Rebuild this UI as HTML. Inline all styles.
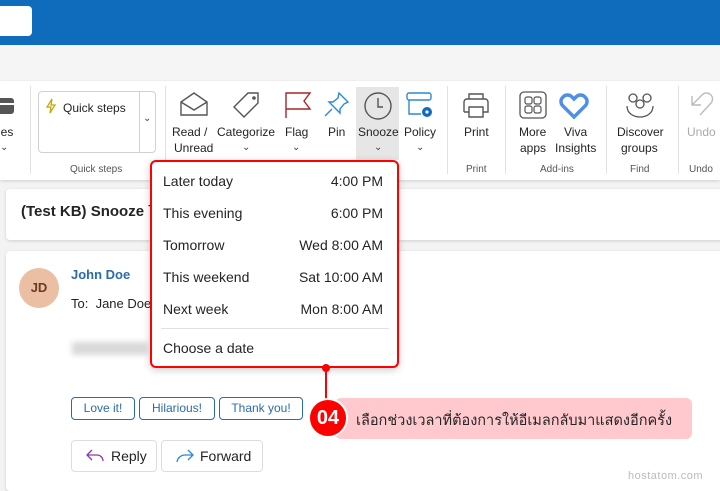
<!DOCTYPE html>
<html><head><meta charset="utf-8"><style>
*{box-sizing:border-box;margin:0;padding:0}
body{width:720px;height:486px;overflow:hidden;background:#f3f3f3;font-family:"Segoe UI","Liberation Sans",sans-serif;color:#242424;position:relative}
.abs{position:absolute}
.top{left:0;top:0;width:720px;height:45px;background:#0f6cbd}
.search{left:-10px;top:6px;width:42px;height:30px;background:#fff;border-radius:4px}
.band{left:0;top:45px;width:720px;height:36px;background:#f5f5f5}
.ribbon{left:0;top:81px;width:720px;height:99px;background:#fff;box-shadow:0 1px 3px rgba(0,0,0,.15)}
.lbl{font-size:12px;color:#242424;text-align:center;line-height:16px}
.glbl{font-size:10px;color:#555;top:162px}
.sep{top:86px;width:1px;height:88px;background:#e1e1e1}
.chev{font-size:10px;color:#444}
.card{background:#fff;border-radius:4px;box-shadow:0 1px 3px rgba(0,0,0,.15)}
.menu{left:150px;top:160px;width:249px;height:208px;background:#fff;border:2px solid #f00;border-radius:6px;box-shadow:0 2px 8px rgba(0,0,0,.2)}
.row{position:absolute;left:11px;right:14px;font-size:14px;display:flex;justify-content:space-between;color:#242424}
.pill{top:397px;height:23px;border:1px solid #2b6ca8;border-radius:4px;font-size:12px;color:#2b6ca8;text-align:center;line-height:21px}
.btn{top:440px;height:32px;border:1px solid #ddd;border-radius:4px;font-size:14px;line-height:30px}
</style></head><body>
<div class="abs top"></div>
<div class="abs search"></div>
<div class="abs band"></div>
<div class="abs ribbon"></div>

<svg class="abs" style="left:-6px;top:94px" width="24" height="24"><rect x="2" y="4" width="18" height="16" rx="3" fill="#555"/><path d="M2 10h18" stroke="#fff" stroke-width="2"/></svg>
<div class="abs lbl" style="left:-2px;top:124px">les</div>
<div class="abs chev" style="left:0;top:142px">⌄</div>
<div class="abs sep" style="left:30px"></div>

<div class="abs" style="left:38px;top:91px;width:118px;height:62px;border:1px solid #d1d1d1;border-radius:4px"></div>
<div class="abs" style="left:139px;top:91px;width:1px;height:62px;background:#d1d1d1"></div>
<div class="abs chev" style="left:143px;top:113px">⌄</div>
<svg class="abs" style="left:45px;top:98px" width="12" height="16"><path d="M7 1L2 9h4l-1 6 5-8H6z" fill="none" stroke="#c8a200" stroke-width="1.2"/></svg>
<div class="abs lbl" style="left:63px;top:100px">Quick steps</div>
<div class="abs lbl glbl" style="left:70px">Quick steps</div>
<div class="abs sep" style="left:165px"></div>

<svg class="abs" style="left:178px;top:90px" width="32" height="28"><path d="M3 12L16 3l13 9v13H3z M3 12l13 8 13-8" fill="none" stroke="#555" stroke-width="1.4"/></svg>
<div class="abs lbl" style="left:172px;top:124px">Read /</div>
<div class="abs lbl" style="left:174px;top:140px">Unread</div>
<svg class="abs" style="left:230px;top:90px" width="32" height="30"><path d="M18 3h10v10L14 27 4 17z" fill="none" stroke="#555" stroke-width="1.4"/><circle cx="24" cy="8" r="1.8" fill="#555"/></svg>
<div class="abs lbl" style="left:217px;top:124px">Categorize</div>
<div class="abs chev" style="left:242px;top:142px">⌄</div>
<svg class="abs" style="left:284px;top:90px" width="28" height="30"><path d="M2 28V3h24l-6 8 6 8H2" fill="none" stroke="#a4262c" stroke-width="1.4"/></svg>
<div class="abs lbl" style="left:285px;top:124px">Flag</div>
<div class="abs chev" style="left:292px;top:142px">⌄</div>
<svg class="abs" style="left:323px;top:90px" width="28" height="28"><path d="M16 3l9 9-4 2-4 5 0 4-11-11h4l5-4z M9 19l-7 7" fill="none" stroke="#2b88d8" stroke-width="1.4"/></svg>
<div class="abs lbl" style="left:328px;top:124px">Pin</div>
<div class="abs" style="left:356px;top:87px;width:43px;height:73px;background:#e6e6e6"></div>
<svg class="abs" style="left:362px;top:90px" width="32" height="32"><circle cx="16" cy="16" r="13" fill="none" stroke="#555" stroke-width="1.4"/><path d="M16 8v9h5" fill="none" stroke="#555" stroke-width="1.4"/></svg>
<div class="abs lbl" style="left:358px;top:124px">Snooze</div>
<div class="abs chev" style="left:374px;top:142px">⌄</div>
<svg class="abs" style="left:405px;top:90px" width="30" height="30"><rect x="2" y="3" width="24" height="7" rx="2" fill="none" stroke="#2b88d8" stroke-width="1.4"/><path d="M4 10v14h12" fill="none" stroke="#2b88d8" stroke-width="1.4"/><circle cx="22" cy="22" r="5" fill="#0f6cbd"/><circle cx="22" cy="22" r="1.6" fill="#fff"/></svg>
<div class="abs lbl" style="left:404px;top:124px">Policy</div>
<div class="abs chev" style="left:416px;top:142px">⌄</div>
<div class="abs sep" style="left:447px"></div>

<svg class="abs" style="left:460px;top:90px" width="32" height="30"><path d="M9 9V4h14v5 M4 22V12a3 3 0 013-3h18a3 3 0 013 3v10h-5 M9 22H4 M9 17h14v10H9z" fill="none" stroke="#555" stroke-width="1.4"/></svg>
<div class="abs lbl" style="left:464px;top:124px">Print</div>
<div class="abs lbl glbl" style="left:466px">Print</div>
<div class="abs sep" style="left:505px"></div>

<svg class="abs" style="left:519px;top:91px" width="28" height="28"><rect x="1" y="1" width="26" height="26" rx="4" fill="none" stroke="#555" stroke-width="1.3"/><rect x="6" y="6" width="7" height="7" rx="2" fill="none" stroke="#555" stroke-width="1.2"/><rect x="15" y="6" width="7" height="7" rx="2" fill="none" stroke="#555" stroke-width="1.2"/><rect x="6" y="15" width="7" height="7" rx="2" fill="none" stroke="#555" stroke-width="1.2"/><rect x="15" y="15" width="7" height="7" rx="2" fill="none" stroke="#555" stroke-width="1.2"/></svg>
<div class="abs lbl" style="left:519px;top:124px">More</div>
<div class="abs lbl" style="left:520px;top:140px">apps</div>
<svg class="abs" style="left:559px;top:90px" width="30" height="30"><path d="M15 27L4 16a6 6 0 010-9 6 6 0 019 0l2 2 2-2a6 6 0 019 0 6 6 0 010 9z" fill="none" stroke="#4f8fe8" stroke-width="3.5"/></svg>
<div class="abs lbl" style="left:564px;top:124px">Viva</div>
<div class="abs lbl" style="left:555px;top:140px">Insights</div>
<div class="abs lbl glbl" style="left:540px">Add-ins</div>
<div class="abs sep" style="left:606px"></div>

<svg class="abs" style="left:624px;top:90px" width="32" height="30"><circle cx="9" cy="8" r="4" fill="none" stroke="#555" stroke-width="1.3"/><circle cx="23" cy="8" r="4" fill="none" stroke="#555" stroke-width="1.3"/><circle cx="16" cy="14" r="4" fill="none" stroke="#555" stroke-width="1.3"/><path d="M3 16c0 7 6 11 13 11s13-4 13-11" fill="none" stroke="#555" stroke-width="1.3"/></svg>
<div class="abs lbl" style="left:617px;top:124px">Discover</div>
<div class="abs lbl" style="left:621px;top:140px">groups</div>
<div class="abs lbl glbl" style="left:630px">Find</div>
<div class="abs sep" style="left:678px"></div>
<svg class="abs" style="left:688px;top:90px" width="26" height="28"><path d="M4 6v9h9 M4 15L14 5a6 6 0 019 8L12 25" fill="none" stroke="#bbb" stroke-width="1.4"/></svg>
<div class="abs lbl" style="left:687px;top:124px;color:#aaa">Undo</div>
<div class="abs lbl glbl" style="left:689px">Undo</div>

<div class="abs card" style="left:6px;top:189px;width:720px;height:51px"></div>
<div class="abs" style="left:21px;top:203px;font-size:15px;font-weight:bold;color:#242424">(Test KB) Snooze ᵀ</div>

<div class="abs card" style="left:6px;top:251px;width:720px;height:240px"></div>
<div class="abs" style="left:19px;top:268px;width:40px;height:40px;border-radius:50%;background:#ebbfa3;color:#6b3a1f;font-size:13px;font-weight:bold;text-align:center;line-height:40px">JD</div>
<div class="abs" style="left:71px;top:267px;font-size:13px;font-weight:bold;color:#2b6ca8">John Doe</div>
<div class="abs" style="left:71px;top:296px;font-size:13px">To:&nbsp; Jane Doe</div>
<div class="abs" style="left:72px;top:342px;width:76px;height:13px;background:#d8d8d8;filter:blur(3px)"></div>
<div class="abs pill" style="left:71px;width:64px">Love it!</div>
<div class="abs pill" style="left:139px;width:76px">Hilarious!</div>
<div class="abs pill" style="left:219px;width:84px">Thank you!</div>
<div class="abs btn" style="left:71px;width:86px"><svg class="abs" style="left:14px;top:8px" width="18" height="14"><path d="M6 1L1 6l5 5 M1 6h10a6 6 0 016 6" fill="none" stroke="#8a3aa8" stroke-width="1.3"/></svg><span class="abs" style="left:39px">Reply</span></div>
<div class="abs btn" style="left:161px;width:102px"><svg class="abs" style="left:14px;top:8px" width="18" height="14"><path d="M12 1l5 5-5 5 M17 6H9a8 8 0 00-8 7" fill="none" stroke="#2b88d8" stroke-width="1.3"/></svg><span class="abs" style="left:38px">Forward</span></div>

<div class="abs menu">
<div class="row" style="top:11px"><span>Later today</span><span>4:00 PM</span></div>
<div class="row" style="top:43px"><span>This evening</span><span>6:00 PM</span></div>
<div class="row" style="top:75px"><span>Tomorrow</span><span>Wed 8:00 AM</span></div>
<div class="row" style="top:107px"><span>This weekend</span><span>Sat 10:00 AM</span></div>
<div class="row" style="top:139px"><span>Next week</span><span>Mon 8:00 AM</span></div>
<div style="position:absolute;left:9px;right:8px;top:166px;height:1px;background:#e0e0e0"></div>
<div class="row" style="top:178px"><span>Choose a date</span></div>
</div>

<div class="abs" style="left:325px;top:367px;width:2px;height:32px;background:#f00"></div>
<div class="abs" style="left:322px;top:364px;width:8px;height:8px;border-radius:50%;background:#f00"></div>
<div class="abs" style="left:335px;top:398px;width:357px;height:41px;background:#ffc9ce;border-radius:6px"></div>
<div class="abs" style="left:308px;top:398px;width:40px;height:40px;border-radius:50%;background:#f00;border:2px solid #fff;color:#fff;font-size:20px;font-weight:bold;text-align:center;line-height:36px">04</div>
<div class="abs" style="left:356px;top:409px;font-size:14.5px;color:#242424;font-family:'Liberation Sans','DejaVu Sans',sans-serif;white-space:nowrap">เลือกช่วงเวลาที่ต้องการให้อีเมลกลับมาแสดงอีกครั้ง</div>
<div class="abs" style="left:628px;top:470px;font-size:11px;color:#bbb;letter-spacing:.5px">hostatom.com</div>
</body></html>
